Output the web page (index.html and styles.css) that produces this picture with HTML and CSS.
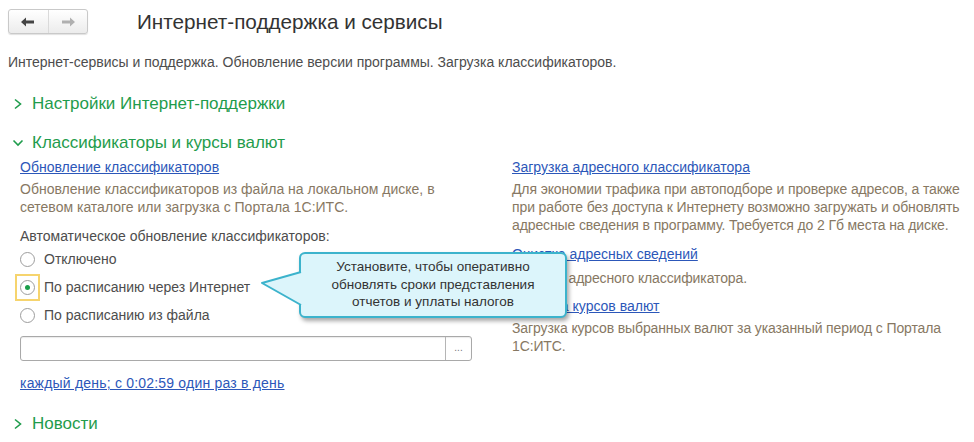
FILE: index.html
```html
<!DOCTYPE html>
<html lang="ru">
<head>
<meta charset="utf-8">
<link rel="stylesheet" href="styles.css">
</head>
<body>
<div class="page">
  <header class="header">
    <div class="nav">
      <div class="nav-btn">
        <svg width="16" height="12" viewBox="0 0 16 12"><path d="M1 6 L6 1.5 L6 4.6 L14 4.6 L14 7.4 L6 7.4 L6 10.5 Z" fill="#444"/></svg>
      </div>
      <div class="nav-btn nav-btn-right">
        <svg width="16" height="12" viewBox="0 0 16 12"><path d="M15 6 L10 1.5 L10 4.6 L2 4.6 L2 7.4 L10 7.4 L10 10.5 Z" fill="#b0b0b0"/></svg>
      </div>
    </div>
    <h1 class="title">Интернет-поддержка и сервисы</h1>
  </header>

  <p class="subtitle">Интернет-сервисы и поддержка. Обновление версии программы. Загрузка классификаторов.</p>

  <div class="group-head group-first">
    <svg class="chev" width="10" height="12" viewBox="0 0 10 12"><polyline points="2,1.5 7.5,6 2,10.5" fill="none" stroke="#1f9c4c" stroke-width="1.6"/></svg>
    <span>Настройки Интернет-поддержки</span>
  </div>

  <div class="group-head group-second">
    <svg class="chev" width="12" height="10" viewBox="0 0 12 10"><polyline points="1.5,2.5 6,7 10.5,2.5" fill="none" stroke="#1f9c4c" stroke-width="1.6"/></svg>
    <span>Классификаторы и курсы валют</span>
  </div>

  <div class="columns">
    <div class="col col-left">
      <a class="link">Обновление классификаторов</a>
      <p class="note">Обновление классификаторов из файла на локальном диске, в сетевом каталоге или загрузка с Портала 1С:ИТС.</p>
      <div class="label">Автоматическое обновление классификаторов:</div>
      <div class="radios">
        <div class="radio-row"><span class="radio-wrap"><span class="radio"></span></span><span>Отключено</span></div>
        <div class="radio-row"><span class="radio-wrap focused"><span class="radio checked"></span></span><span>По расписанию через Интернет</span></div>
        <div class="radio-row"><span class="radio-wrap"><span class="radio"></span></span><span>По расписанию из файла</span></div>
      </div>
      <div class="field">
        <div class="field-input"></div>
        <div class="field-btn">...</div>
      </div>
      <a class="link link-schedule">каждый день; с 0:02:59 один раз в день</a>
    </div>
    <div class="col col-right">
      <a class="link">Загрузка адресного классификатора</a>
      <p class="note">Для экономии трафика при автоподборе и проверке адресов, а также при работе без доступа к Интернету возможно загружать и обновлять адресные сведения в программу. Требуется до 2 Гб места на диске.</p>
      <a class="link link-next">Очистка адресных сведений</a>
      <p class="note note-short">Очистка адресного классификатора.</p>
      <a class="link link-next2">Загрузка курсов валют</a>
      <p class="note">Загрузка курсов выбранных валют за указанный период с Портала 1С:ИТС.</p>
    </div>
  </div>

  <div class="group-head group-news">
    <svg class="chev" width="10" height="12" viewBox="0 0 10 12"><polyline points="2,1.5 7.5,6 2,10.5" fill="none" stroke="#1f9c4c" stroke-width="1.6"/></svg>
    <span>Новости</span>
  </div>

  <div class="callout">
    <svg class="callout-tail" width="44" height="40" viewBox="0 0 44 40">
      <path d="M40 1 L1 12 L40 34" fill="#dcf5fb" stroke="#3cb3cc" stroke-width="2" stroke-linejoin="round"/>
    </svg>
    <div class="callout-box">Установите, чтобы оперативно обновлять сроки представления отчетов и уплаты налогов</div>
  </div>
</div>
</body>
</html>
```
FILE: styles.css
```css
html, body {
  margin: 0;
  padding: 0;
  background: #fff;
}
body {
  font-family: "Liberation Sans", Arial, sans-serif;
  font-size: 14px;
  color: #4d4d4d;
  width: 974px;
  height: 442px;
  overflow: hidden;
}
.page {
  position: relative;
  padding: 0 0 0 8px;
}
.header {
  display: flex;
  align-items: center;
  height: 25px;
  padding-top: 9px;
}
.nav {
  display: flex;
  width: 78px;
  height: 23px;
  border: 1px solid #c9c9c9;
  border-radius: 3px;
  background: linear-gradient(#ffffff, #ececec);
  box-shadow: 0 1px 1px rgba(0,0,0,0.12);
}
.nav-btn {
  flex: 1;
  display: flex;
  align-items: center;
  justify-content: center;
}
.nav-btn-right {
  border-left: 1px solid #dadada;
}
.title {
  margin: 0 0 0 49px;
  font-size: 20.7px;
  font-weight: normal;
  color: #333;
  line-height: 25px;
}
.subtitle {
  margin: 19px 0 0 0;
  line-height: 18px;
  color: #4d4d4d;
}
.group-head {
  display: flex;
  align-items: center;
  height: 24px;
  font-size: 17px;
  color: #1f9c4c;
}
.group-head .chev {
  margin-left: 5px;
  margin-right: 9px;
}
.group-first { margin-top: 21px; }
.group-second { margin-top: 15px; }
.group-second .chev { margin-left: 4px; margin-right: 8px; }
.group-news { margin-top: 20px; }
.columns {
  display: grid;
  grid-template-columns: 492px 470px;
  margin-top: 3px;
  padding-left: 12px;
}
.col {
  display: flex;
  flex-direction: column;
  align-items: flex-start;
}
.link {
  color: #2c57b9;
  text-decoration: underline;
  line-height: 18px;
}
.link-schedule { letter-spacing: 0.2px; }
.note {
  margin: 4px 0 0 0;
  line-height: 18px;
  color: #877863;
}
.col-left .note { width: 455px; }
.col-right .note { width: 462px; letter-spacing: -0.12px; }
.label {
  margin-top: 11px;
  line-height: 18px;
  color: #4d4d4d;
}
.radios {
  display: flex;
  flex-direction: column;
}
.radio-row {
  display: flex;
  align-items: center;
  height: 28px;
}
.radio-wrap {
  display: flex;
  align-items: center;
  justify-content: center;
  width: 21px;
  height: 23px;
  margin-left: -5px;
  margin-right: 4px;
  border: 2px solid transparent;
}
.radio-wrap.focused {
  border-color: #f6d46e;
}
.radio {
  width: 13px;
  height: 13px;
  border: 1px solid #9d9d9d;
  border-radius: 50%;
  background: #fff;
  display: flex;
  align-items: center;
  justify-content: center;
}
.radio.checked::after {
  content: "";
  width: 5px;
  height: 5px;
  border-radius: 50%;
  background: #1a9e4a;
}
.field {
  display: flex;
  width: 450px;
  height: 23px;
  margin-top: 7px;
  border: 1px solid #a9a9a9;
  border-radius: 3px;
  box-shadow: inset 0 1px 1px rgba(0,0,0,0.08);
}
.field-input { flex: 1; }
.field-btn {
  width: 25px;
  border-left: 1px solid #b5b5b5;
  color: #777;
  font-size: 10px;
  text-align: center;
  line-height: 22px;
}
.link-schedule { margin-top: 13px; }
.link-next { margin-top: 11px; }
.note-short { margin-top: 6px; }
.link-next2 { margin-top: 10px; }
.callout {
  position: absolute;
  left: 261px;
  top: 252px;
  width: 306px;
  height: 64px;
}
.callout-tail {
  position: absolute;
  left: 0;
  top: 19px;
  z-index: 2;
}
.callout-box {
  position: absolute;
  left: 38px;
  top: 0;
  width: 244px;
  height: 54px;
  padding: 4px 10px;
  border: 2px solid #3cb3cc;
  border-radius: 6px;
  background: #dcf5fb;
  box-shadow: 2px 3px 4px rgba(0,0,0,0.35);
  color: #333;
  text-align: center;
  line-height: 17.5px;
  font-size: 13.5px;
  z-index: 1;
}
```
